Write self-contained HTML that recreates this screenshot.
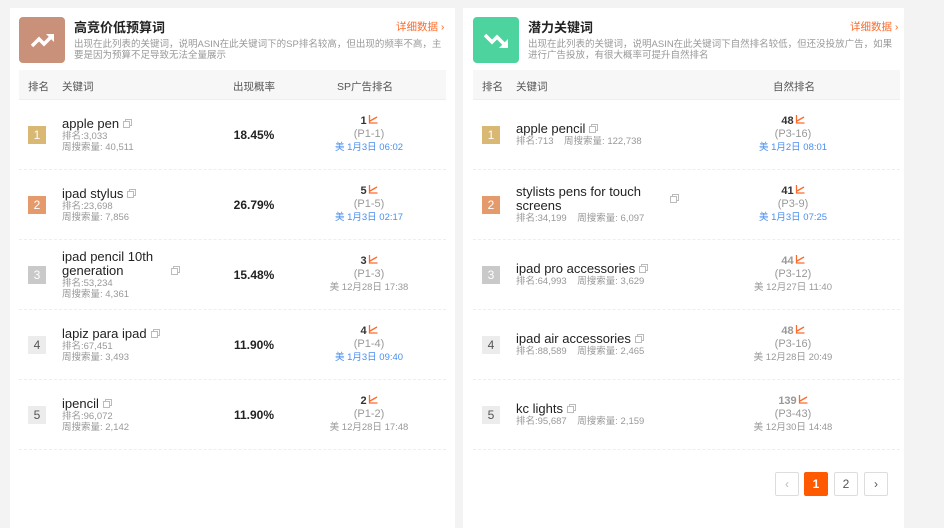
<!DOCTYPE html>
<html><head><meta charset="utf-8"><style>
*{margin:0;padding:0;box-sizing:border-box}
body{width:944px;height:519px;background:#f3f3f3;font-family:"Liberation Sans","Noto Sans CJK SC",sans-serif;position:relative;overflow:hidden;color:#333}
.card{position:absolute;top:8px;height:520px;background:#fff}
.ic{position:absolute;top:9px;width:46px;height:46px;border-radius:4px}
.title{position:absolute;top:12px;font-size:13px;line-height:15px;font-weight:bold;color:#222}
.desc{position:absolute;top:31px;font-size:9.5px;line-height:11px;color:#999}
.more{position:absolute;top:11px;font-size:10.5px;color:#ff6a2a}
.hd{position:absolute;top:62px;height:30px;background:#f7f7f7;font-size:10.5px;color:#555;border-bottom:1px solid #eee}
.hd span{position:absolute;top:9px}
.row{position:absolute;height:70px;border-bottom:1px dashed #eee}
.rk{position:absolute;top:26px;width:18px;height:18px;font-size:12px;line-height:18px;text-align:center;color:#fff}
.kw{position:absolute;top:0;height:69px;display:flex;flex-direction:column;justify-content:center}
.kw .n{font-size:13px;line-height:14px;color:#222}
.kw .s{font-size:9.5px;line-height:11px;color:#999}
.cp{display:inline-block;margin-left:4px;vertical-align:0}
.pc{position:absolute;top:28px;font-size:12px;font-weight:bold;color:#222;text-align:center;width:60px}
.sp{position:absolute;top:14px;width:120px;text-align:center;font-size:10px;line-height:13px}
.sp .a{font-size:11px;font-weight:bold;color:#333}
.sp .a svg{vertical-align:0;margin-left:1px}
.sp .b{color:#999;font-size:11px}
.sp .c{color:#4a8ef0;font-size:9.5px}
.sp .g{color:#999;font-size:9.5px}
.pg{position:absolute;top:472px;width:24px;height:24px;border:1px solid #ddd;border-radius:2px;font-size:12px;text-align:center;line-height:22px;color:#555;background:#fff}
</style></head><body>
<svg width="0" height="0" style="position:absolute"><defs>
<symbol id="ch" viewBox="0 0 10 10"><path d="M1.5 1 V9 H9.5 M2 7 L9 3" stroke="#ff6a2a" stroke-width="1.3" fill="none"/></symbol>
<symbol id="cpy" viewBox="0 0 9 9"><rect x="2.5" y="0.5" width="6" height="6" fill="none" stroke="#bbb"/><rect x="0.5" y="2.5" width="6" height="6" fill="#fff" stroke="#bbb"/></symbol>
</defs></svg>

<div class="card" style="left:10px;width:445px">
 <div class="ic" style="left:9px;background:#c9907a"><svg width="46" height="46"><path d="M13 29 L20 22 L25 27 L33 19" stroke="#fff" stroke-width="3.5" fill="none"/><path d="M27 17 L35 17 L35 25 Z" fill="#fff"/></svg></div>
 <div class="title" style="left:64px">高竞价低预算词</div>
 <div class="more" style="left:386px">详细数据 ›</div>
 <div class="desc" style="left:64px;width:376px">出现在此列表的关键词，说明ASIN在此关键词下的SP排名较高，但出现的频率不高，主要是因为预算不足导致无法全量展示</div>
 <div class="hd" style="left:9px;width:427px"><span style="left:9px">排名</span><span style="left:43px">关键词</span><span style="left:214px">出现概率</span><span style="left:318px">SP广告排名</span></div>

 <div class="row" style="left:9px;top:92px;width:427px"><div class="rk" style="left:9px;background:#d8b872">1</div><div class="kw" style="left:43px"><div class="n">apple pen<svg class="cp" width="9" height="9"><use href="#cpy"/></svg></div><div class="s">排名:3,033</div><div class="s">周搜索量: 40,511</div></div><div class="pc" style="left:205px">18.45%</div><div class="sp" style="left:290px"><div class="a">1<svg width="10" height="10"><use href="#ch"/></svg></div><div class="b">(P1-1)</div><div class="c">美 1月3日 06:02</div></div></div>

 <div class="row" style="left:9px;top:162px;width:427px"><div class="rk" style="left:9px;background:#e59a6c">2</div><div class="kw" style="left:43px"><div class="n">ipad stylus<svg class="cp" width="9" height="9"><use href="#cpy"/></svg></div><div class="s">排名:23,698</div><div class="s">周搜索量: 7,856</div></div><div class="pc" style="left:205px">26.79%</div><div class="sp" style="left:290px"><div class="a">5<svg width="10" height="10"><use href="#ch"/></svg></div><div class="b">(P1-5)</div><div class="c">美 1月3日 02:17</div></div></div>

 <div class="row" style="left:9px;top:232px;width:427px"><div class="rk" style="left:9px;background:#c9c9c9">3</div><div class="kw" style="left:43px;width:130px"><div class="n">ipad pencil 10th<br>generation</div><div class="s">排名:53,234</div><div class="s">周搜索量: 4,361</div></div><svg style="position:absolute;left:152px;top:26px" width="9" height="9"><use href="#cpy"/></svg><div class="pc" style="left:205px">15.48%</div><div class="sp" style="left:290px"><div class="a">3<svg width="10" height="10"><use href="#ch"/></svg></div><div class="b">(P1-3)</div><div class="g">美 12月28日 17:38</div></div></div>

 <div class="row" style="left:9px;top:302px;width:427px"><div class="rk" style="left:9px;background:#ececec;color:#555">4</div><div class="kw" style="left:43px"><div class="n">lapiz para ipad<svg class="cp" width="9" height="9"><use href="#cpy"/></svg></div><div class="s">排名:67,451</div><div class="s">周搜索量: 3,493</div></div><div class="pc" style="left:205px">11.90%</div><div class="sp" style="left:290px"><div class="a">4<svg width="10" height="10"><use href="#ch"/></svg></div><div class="b">(P1-4)</div><div class="c">美 1月3日 09:40</div></div></div>

 <div class="row" style="left:9px;top:372px;width:427px"><div class="rk" style="left:9px;background:#ececec;color:#555">5</div><div class="kw" style="left:43px"><div class="n">ipencil<svg class="cp" width="9" height="9"><use href="#cpy"/></svg></div><div class="s">排名:96,072</div><div class="s">周搜索量: 2,142</div></div><div class="pc" style="left:205px">11.90%</div><div class="sp" style="left:290px"><div class="a">2<svg width="10" height="10"><use href="#ch"/></svg></div><div class="b">(P1-2)</div><div class="g">美 12月28日 17:48</div></div></div>
</div>

<div class="card" style="left:463px;width:441px">
 <div class="ic" style="left:10px;background:#4dd39d"><svg width="46" height="46"><path d="M12 18 L19 25 L24 20 L32 28" stroke="#fff" stroke-width="3.5" fill="none"/><path d="M35 22 L35 31 L26 31 Z" fill="#fff"/></svg></div>
 <div class="title" style="left:65px">潜力关键词</div>
 <div class="more" style="left:387px">详细数据 ›</div>
 <div class="desc" style="left:65px;width:372px">出现在此列表的关键词，说明ASIN在此关键词下自然排名较低，但还没投放广告，如果进行广告投放，有很大概率可提升自然排名</div>
 <div class="hd" style="left:10px;width:427px"><span style="left:9px">排名</span><span style="left:43px">关键词</span><span style="left:300px">自然排名</span></div>

 <div class="row" style="left:10px;top:92px;width:427px"><div class="rk" style="left:9px;background:#d8b872">1</div><div class="kw" style="left:43px"><div class="n">apple pencil<svg class="cp" width="9" height="9"><use href="#cpy"/></svg></div><div class="s">排名:713 &nbsp;&nbsp; 周搜索量: 122,738</div></div><div class="sp" style="left:260px"><div class="a">48<svg width="10" height="10"><use href="#ch"/></svg></div><div class="b">(P3-16)</div><div class="c">美 1月2日 08:01</div></div></div>

 <div class="row" style="left:10px;top:162px;width:427px"><div class="rk" style="left:9px;background:#e59a6c">2</div><div class="kw" style="left:43px;width:140px"><div class="n">stylists pens for touch screens</div><div class="s">排名:34,199 &nbsp;&nbsp; 周搜索量: 6,097</div></div><svg style="position:absolute;left:197px;top:24px" width="9" height="9"><use href="#cpy"/></svg><div class="sp" style="left:260px"><div class="a">41<svg width="10" height="10"><use href="#ch"/></svg></div><div class="b">(P3-9)</div><div class="c">美 1月3日 07:25</div></div></div>

 <div class="row" style="left:10px;top:232px;width:427px"><div class="rk" style="left:9px;background:#c9c9c9">3</div><div class="kw" style="left:43px"><div class="n">ipad pro accessories<svg class="cp" width="9" height="9"><use href="#cpy"/></svg></div><div class="s">排名:64,993 &nbsp;&nbsp; 周搜索量: 3,629</div></div><div class="sp" style="left:260px"><div class="a" style="color:#999">44<svg width="10" height="10"><use href="#ch"/></svg></div><div class="b">(P3-12)</div><div class="g">美 12月27日 11:40</div></div></div>

 <div class="row" style="left:10px;top:302px;width:427px"><div class="rk" style="left:9px;background:#ececec;color:#555">4</div><div class="kw" style="left:43px"><div class="n">ipad air accessories<svg class="cp" width="9" height="9"><use href="#cpy"/></svg></div><div class="s">排名:88,589 &nbsp;&nbsp; 周搜索量: 2,465</div></div><div class="sp" style="left:260px"><div class="a" style="color:#999">48<svg width="10" height="10"><use href="#ch"/></svg></div><div class="b">(P3-16)</div><div class="g">美 12月28日 20:49</div></div></div>

 <div class="row" style="left:10px;top:372px;width:427px"><div class="rk" style="left:9px;background:#ececec;color:#555">5</div><div class="kw" style="left:43px"><div class="n">kc lights<svg class="cp" width="9" height="9"><use href="#cpy"/></svg></div><div class="s">排名:95,687 &nbsp;&nbsp; 周搜索量: 2,159</div></div><div class="sp" style="left:260px"><div class="a" style="color:#999">139<svg width="10" height="10"><use href="#ch"/></svg></div><div class="b">(P3-43)</div><div class="g">美 12月30日 14:48</div></div></div>
</div>

<div class="pg" style="left:775px;color:#bbb">‹</div>
<div class="pg" style="left:804px;background:#ff5a00;border-color:#ff5a00;color:#fff;font-weight:bold">1</div>
<div class="pg" style="left:834px">2</div>
<div class="pg" style="left:864px">›</div>
</body></html>
